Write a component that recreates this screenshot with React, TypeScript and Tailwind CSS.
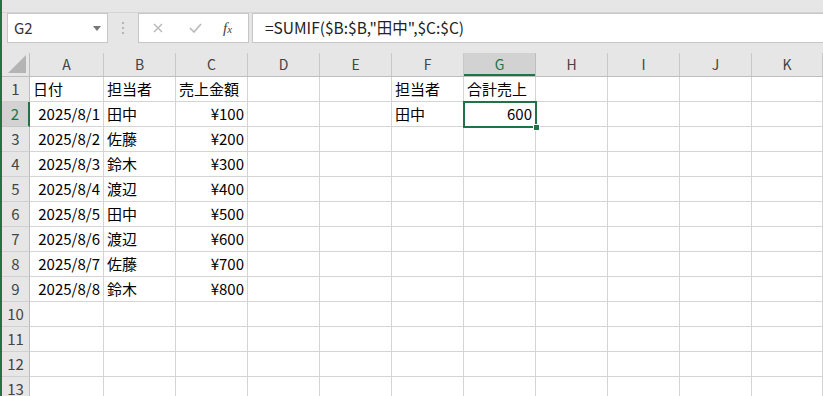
import { Fragment } from "react";

const COLS = [
  { key: "A", w: "w-[74px]" },
  { key: "B", w: "w-[72px]" },
  { key: "C", w: "w-[72px]" },
  { key: "D", w: "w-[72px]" },
  { key: "E", w: "w-[72px]" },
  { key: "F", w: "w-[72px]" },
  { key: "G", w: "w-[72px]" },
  { key: "H", w: "w-[72px]" },
  { key: "I", w: "w-[72px]" },
  { key: "J", w: "w-[72px]" },
  { key: "K", w: "flex-1" },
];

type Cell = { v: string; right?: boolean };

const DATA: Record<number, Record<string, Cell>> = {
  1: { A: { v: "日付" }, B: { v: "担当者" }, C: { v: "売上金額" }, F: { v: "担当者" }, G: { v: "合計売上" } },
  2: { A: { v: "2025/8/1", right: true }, B: { v: "田中" }, C: { v: "¥100", right: true }, F: { v: "田中" }, G: { v: "600", right: true } },
  3: { A: { v: "2025/8/2", right: true }, B: { v: "佐藤" }, C: { v: "¥200", right: true } },
  4: { A: { v: "2025/8/3", right: true }, B: { v: "鈴木" }, C: { v: "¥300", right: true } },
  5: { A: { v: "2025/8/4", right: true }, B: { v: "渡辺" }, C: { v: "¥400", right: true } },
  6: { A: { v: "2025/8/5", right: true }, B: { v: "田中" }, C: { v: "¥500", right: true } },
  7: { A: { v: "2025/8/6", right: true }, B: { v: "渡辺" }, C: { v: "¥600", right: true } },
  8: { A: { v: "2025/8/7", right: true }, B: { v: "佐藤" }, C: { v: "¥700", right: true } },
  9: { A: { v: "2025/8/8", right: true }, B: { v: "鈴木" }, C: { v: "¥800", right: true } },
};

const ROWS = Array.from({ length: 13 }, (_, i) => i + 1);
const FONT = "font-['Noto_Sans_CJK_JP','Noto_Sans',sans-serif]";

export default function App() {
  return (
    <div className={`flex h-[396px] w-[823px] overflow-hidden bg-[#e6e6e6] ${FONT}`}>
      <div className="w-[2px] shrink-0 bg-[#217346]" />

      <div className="flex min-w-0 flex-1 flex-col">
        {/* formula bar */}
        <div className="mt-[12px] flex h-[31px] shrink-0 items-stretch border-t border-[#d4d4d4]">
          <div className="ml-[5px] flex w-[101px] items-center justify-between border border-[#c6c6c6] bg-white pl-[6px] pr-[6px]">
            <span className="text-[15px] text-[#333]">G2</span>
            <svg width="8" height="5" viewBox="0 0 8 5"><path d="M0 0h8L4 5z" fill="#777" /></svg>
          </div>
          <div className="flex w-[30px] flex-col items-center justify-center gap-[3px]">
            <span className="h-[2px] w-[2px] bg-[#b5b5b5]" />
            <span className="h-[2px] w-[2px] bg-[#b5b5b5]" />
            <span className="h-[2px] w-[2px] bg-[#b5b5b5]" />
          </div>
          <div className="flex w-[111px] items-center border border-[#c6c6c6] bg-white">
            <svg className="ml-[14px]" width="10" height="10" viewBox="0 0 10 10">
              <path d="M1 1l8 8M9 1l-8 8" stroke="#b8b8b8" strokeWidth="1.4" />
            </svg>
            <svg className="ml-[26px]" width="13" height="10" viewBox="0 0 13 10">
              <path d="M1 5l4 4 7-8" stroke="#b8b8b8" strokeWidth="1.6" fill="none" />
            </svg>
            <span className="ml-[21px] font-['Liberation_Serif',serif] text-[15px] italic leading-none text-[#444]">
              f<span className="text-[11px]">x</span>
            </span>
          </div>
          <div className="ml-[3px] flex flex-1 items-center border-y border-l border-[#c6c6c6] bg-white pl-[12px] text-[15.5px] text-[#222]">
            =SUMIF($B:$B,"田中",$C:$C)
          </div>
        </div>

        <div className="h-[10px] shrink-0" />

        {/* sheet */}
        <div className="flex flex-1 flex-col bg-white">
          <div className="flex h-[24px] shrink-0 border-b border-[#bdbdbd] bg-[#e6e6e6]">
            <div className="relative w-[28px] shrink-0 border-r border-[#bdbdbd]">
              <svg className="absolute bottom-[3px] right-[3px]" width="18" height="18" viewBox="0 0 18 18">
                <path d="M18 0v18H0z" fill="#b4b4b4" />
              </svg>
            </div>
            {COLS.map((c) => (
              <div
                key={c.key}
                className={`${c.w} flex shrink-0 items-center justify-center border-r text-[14px] ${
                  c.key === "G"
                    ? "border-[#bdbdbd] bg-[#d2d2d2] text-[#217346] shadow-[inset_0_-2px_0_#217346]"
                    : "border-[#c8c8c8] text-[#444]"
                }`}
              >
                {c.key}
              </div>
            ))}
          </div>

          {ROWS.map((r) => (
            <div key={r} className="flex h-[25px] shrink-0">
              <div
                className={`flex w-[28px] shrink-0 items-center justify-center border-b border-r text-[15px] ${
                  r === 2
                    ? "border-b-[#c6c6c6] border-r-[#217346] border-r-2 bg-[#d2d2d2] text-[#217346]"
                    : "border-b-[#d0d0d0] border-r-[#bdbdbd] bg-[#e6e6e6] text-[#444]"
                }`}
              >
                {r}
              </div>
              {COLS.map((c) => {
                const cell = DATA[r]?.[c.key];
                const active = r === 2 && c.key === "G";
                return (
                  <Fragment key={c.key}>
                    <div
                      className={`${c.w} relative flex shrink-0 items-center whitespace-nowrap border-b border-r border-[#d4d4d4] pt-[1px] text-[15px] text-black ${
                        active ? "z-10" : ""
                      } ${cell?.right ? "justify-end pr-[3px]" : "justify-start pl-[3px]"}`}
                    >
                      {cell?.v}
                      {active && (
                        <>
                          <div className="pointer-events-none absolute -left-[1px] -top-[1px] bottom-[-2px] right-[-2px] border-2 border-[#217346]" />
                          <div className="absolute -bottom-[5px] -right-[5px] h-[7px] w-[7px] border border-white bg-[#217346]" />
                        </>
                      )}
                    </div>
                  </Fragment>
                );
              })}
            </div>
          ))}
        </div>
      </div>
    </div>
  );
}
